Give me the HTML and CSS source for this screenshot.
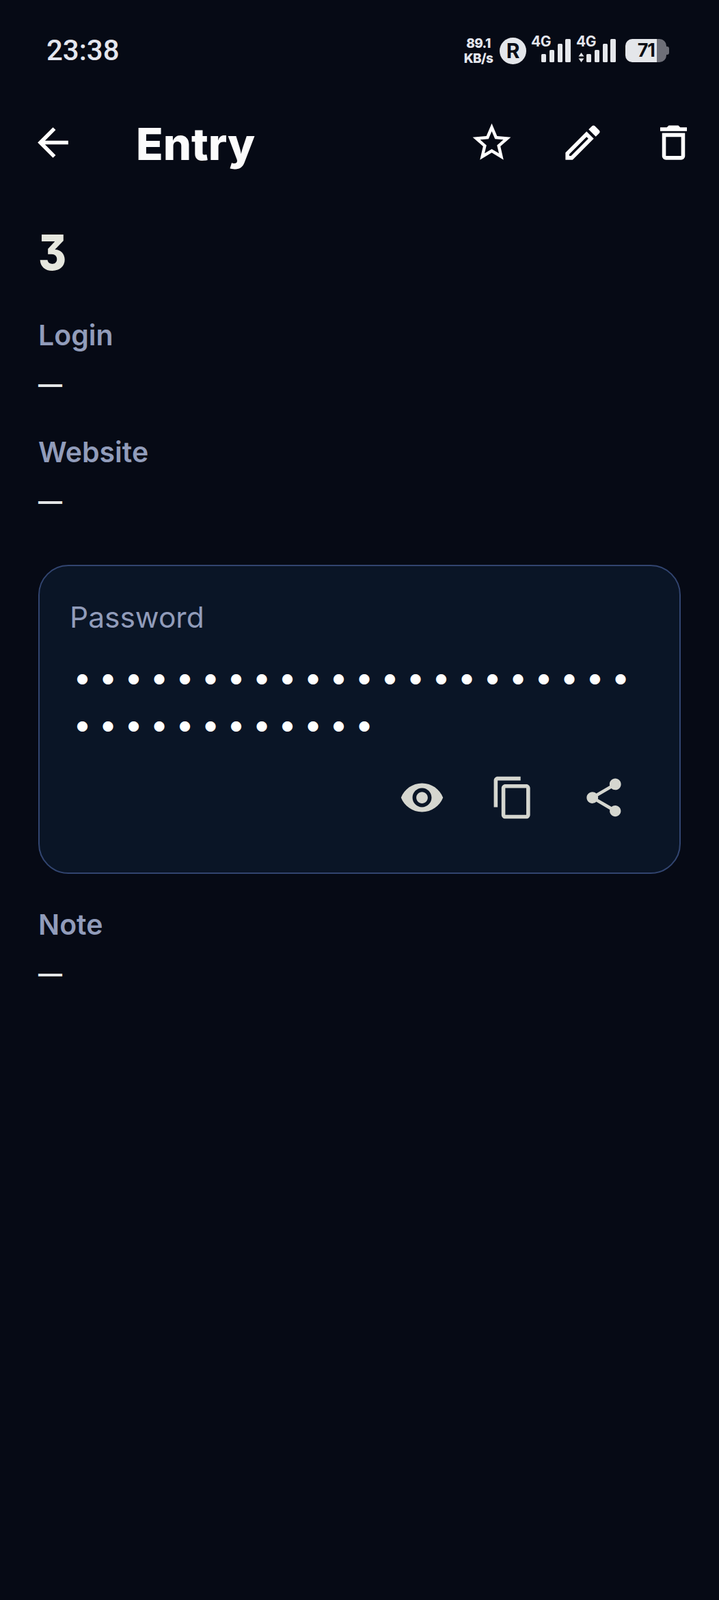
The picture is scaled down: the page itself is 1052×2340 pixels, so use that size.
FILE: index.html
```html
<!DOCTYPE html>
<html lang="en">
<head>
    <meta charset="UTF-8">
    <meta name="viewport" content="width=device-width, initial-scale=1.0">
    <title>Entry</title>
    <link rel="stylesheet" href="styles.css">
</head>
<body>
    <div class="status-bar">
        <div class="time">23:38</div>
        <div class="status-icons">
            <div class="speed"><span>89.1</span><span>KB/s</span></div>
            <div class="r-badge">R</div>
            <div class="signal">
                <span class="net">4G</span>
                <svg class="bars" viewBox="0 0 43 34"><rect x="0" y="22" width="7" height="12" rx="1.5"/><rect x="12" y="16" width="7" height="18" rx="1.5"/><rect x="24" y="7" width="7" height="27" rx="1.5"/><rect x="35" y="0" width="8" height="34" rx="1.5"/></svg>
            </div>
            <div class="signal second">
                <span class="net">4G</span>
                <svg class="arrows" viewBox="0 0 9 14"><path d="M4.5 0L8.5 5.5H.5zM4.5 14L.5 8.500H8.500z"/></svg>
                <svg class="bars" viewBox="0 0 43 34"><rect x="0" y="22" width="7" height="12" rx="1.5"/><rect x="12" y="16" width="7" height="18" rx="1.5"/><rect x="24" y="7" width="7" height="27" rx="1.5"/><rect x="35" y="0" width="8" height="34" rx="1.5"/></svg>
            </div>
            <div class="battery"><div class="battery-fill">71</div><div class="battery-tip"></div></div>
        </div>
    </div>

    <div class="top-bar">
        <button class="icon-btn"><svg viewBox="0 0 24 24"><path d="M20 11H7.830l5.590-5.590L12 4l-8 8 8 8 1.410-1.410L7.830 13H20v-2z"/></svg></button>
        <h1 class="page-title">Entry</h1>
        <div class="top-actions">
            <button class="icon-btn"><svg viewBox="0 0 24 24"><path d="M22 9.240l-7.190-.620L12 2 9.190 8.630 2 9.240l5.460 4.730L5.820 21 12 17.270 18.180 21l-1.630-7.030L22 9.240zM12 15.400l-3.760 2.270 1-4.280-3.320-2.880 4.380-.380L12 6.100l1.710 4.040 4.380.380-3.320 2.880 1 4.280L12 15.400z"/></svg></button>
            <button class="icon-btn"><svg viewBox="0 0 24 24"><path d="M14.060 9.020l.920.920L5.920 19H5v-.920l9.060-9.060M17.660 3c-.250 0-.510.100-.700.290l-1.830 1.830 3.750 3.750 1.830-1.830c.390-.390.390-1.020 0-1.410l-2.340-2.340c-.200-.200-.450-.290-.710-.290zm-3.600 3.190L3 17.250V21h3.750L17.810 9.940l-3.750-3.750z"/></svg></button>
            <button class="icon-btn"><svg viewBox="0 0 24 24"><path d="M16 9v10H8V9h8m-1.500-6h-5l-1 1H5v2h14V4h-3.500l-1-1zM18 7H6v12c0 1.100.9 2 2 2h8c1.100 0 2-.9 2-2V7z"/></svg></button>
        </div>
    </div>

    <div class="content">
        <h2 class="entry-name">3</h2>

        <div class="field">
            <div class="field-label">Login</div>
            <div class="field-value">—</div>
        </div>
        <div class="field">
            <div class="field-label">Website</div>
            <div class="field-value">—</div>
        </div>

        <div class="password-card">
            <div class="password-label">Password</div>
            <div class="password-value">••••••••••••••••••••••••••••••••••</div>
            <div class="password-actions">
                <button class="icon-btn light"><svg viewBox="0 0 24 24"><path d="M12 4.500C7 4.500 2.730 7.610 1 12c1.730 4.390 6 7.500 11 7.500s9.270-3.110 11-7.500c-1.730-4.390-6-7.500-11-7.500zM12 17c-2.760 0-5-2.240-5-5s2.240-5 5-5 5 2.240 5 5-2.240 5-5 5zm0-8c-1.660 0-3 1.340-3 3s1.340 3 3 3 3-1.340 3-3-1.340-3-3-3z"/></svg></button>
                <button class="icon-btn light"><svg viewBox="0 0 24 24"><path d="M16 1H4c-1.100 0-2 .9-2 2v14h2V3h12V1zm3 4H8c-1.100 0-2 .9-2 2v14c0 1.100.9 2 2 2h11c1.100 0 2-.9 2-2V7c0-1.100-.9-2-2-2zm0 16H8V7h11v14z"/></svg></button>
                <button class="icon-btn light"><svg viewBox="0 0 24 24"><path d="M18 16.080c-.760 0-1.440.300-1.960.770L8.910 12.700c.050-.230.090-.460.090-.700s-.040-.470-.090-.700l7.050-4.110c.540.500 1.250.810 2.040.810 1.660 0 3-1.340 3-3s-1.340-3-3-3-3 1.340-3 3c0 .240.040.470.090.700L8.040 9.810C7.500 9.310 6.790 9 6 9c-1.660 0-3 1.340-3 3s1.340 3 3 3c.790 0 1.500-.310 2.040-.810l7.120 4.160c-.050.210-.080.430-.080.650 0 1.610 1.310 2.920 2.920 2.920 1.610 0 2.920-1.310 2.920-2.920s-1.310-2.920-2.920-2.920z"/></svg></button>
            </div>
        </div>

        <div class="field note">
            <div class="field-label">Note</div>
            <div class="field-value">—</div>
        </div>
    </div>
</body>
</html>
```

FILE: styles.css
```css
*{
    margin: 0;
    padding: 0;
    box-sizing: border-box;
}
body{
    width: 1052px;
    height: 2340px;
    background-color: #060a15;
    font-family: 'Inter', sans-serif;
    overflow: hidden;
}

/* status bar */
.status-bar{
    height: 175px;
    padding: 53px 72px 0 68px;
    display: flex;
    justify-content: space-between;
    align-items: flex-start;
    color: #e4e6ee;
}
.time{
    font-family: 'Roboto', sans-serif;
    font-size: 42px;
    font-weight: 500;
    line-height: 42px;
}
.status-icons{
    display: flex;
    align-items: flex-start;
}
.speed{
    display: flex;
    flex-direction: column;
    align-items: center;
    width: 42px;
    font-size: 19px;
    font-weight: 800;
    line-height: 22px;
    letter-spacing: -0.6px;
}
.r-badge{
    width: 39px;
    height: 39px;
    margin: 2px 0 0 10px;
    border-radius: 50%;
    background-color: #e4e6ea;
    color: #0a0d16;
    font-size: 30px;
    font-weight: 700;
    line-height: 39px;
    text-align: center;
}
.signal{
    position: relative;
    display: flex;
    justify-content: flex-end;
    align-items: flex-end;
    width: 58px;
    height: 38px;
    margin-left: 7px;
}
.signal.second{
    margin-left: 8px;
}
.net{
    position: absolute;
    left: 0;
    top: -2px;
    font-size: 21px;
    font-weight: 700;
    line-height: 20px;
    letter-spacing: -0.5px;
}
.bars{
    width: 43px;
    height: 34px;
    fill: #e4e6ea;
}
.arrows{
    width: 9px;
    height: 14px;
    margin-right: 3px;
    fill: #e4e6ea;
}
.battery{
    display: flex;
    align-items: center;
    width: 65px;
    height: 34px;
    margin: 4px 0 0 14px;
}
.battery-fill{
    width: 60px;
    height: 34px;
    border-radius: 10px;
    background: linear-gradient(to right, #e4e6ea 76%, #6e6f78 76%);
    color: #0b0d14;
    font-size: 27px;
    font-weight: 700;
    line-height: 34px;
    text-align: right;
    padding-right: 17px;
    letter-spacing: -1px;
}
.battery-tip{
    width: 4px;
    height: 12px;
    border-radius: 0 3px 3px 0;
    background-color: #6e6f78;
}

/* top bar */
.icon-btn{
    display: block;
    width: 67px;
    height: 67px;
    background-color: transparent;
    border: none;
    fill: #ffffff;
}
.icon-btn svg{
    display: block;
    width: 100%;
    height: 100%;
}
.icon-btn.light{
    fill: #d5d6cf;
}
.top-bar{
    display: flex;
    align-items: center;
    padding: 0 33px 0 44px;
}
.page-title{
    margin: 0 0 -2px 88px;
    padding-top: 2px;
    font-size: 65px;
    font-weight: 800;
    line-height: 67px;
    color: #fbfbfb;
}
.top-actions{
    display: flex;
    gap: 66px;
    margin-left: auto;
}

/* content */
.content{
    padding: 0 56px;
}
.entry-name{
    margin-top: 87px;
    font-size: 72px;
    font-weight: 800;
    line-height: 80px;
    color: #e6e7de;
    font-feature-settings: "cv09";
    transform: scaleX(0.87);
    transform-origin: left;
}
.field{
    margin-top: 56px;
}
.field + .field{
    margin-top: 50px;
}
.field-label{
    font-size: 41px;
    font-weight: 600;
    line-height: 50px;
    color: #919cba;
}
.field-value{
    margin-top: 21px;
    font-size: 35px;
    font-weight: 700;
    line-height: 50px;
    color: #e3e5e6;
}
.password-card{
    height: 452px;
    margin-top: 69px;
    padding: 50px 44px 0 44px;
    background-color: #0a1526;
    border: 2px solid #324570;
    border-radius: 44px;
}
.password-label{
    font-size: 42.500px;
    line-height: 50px;
    color: #919cba;
}
.password-value{
    margin-top: 27px;
    padding: 0 14px 0 5px;
    font-size: 48px;
    line-height: 69px;
    letter-spacing: 10.5px;
    word-break: break-all;
    color: #ffffff;
}
.password-actions{
    display: flex;
    justify-content: flex-end;
    gap: 66px;
    margin-top: 40px;
    padding-right: 33px;
}
.field.note{
    margin-top: 49px;
}
```
